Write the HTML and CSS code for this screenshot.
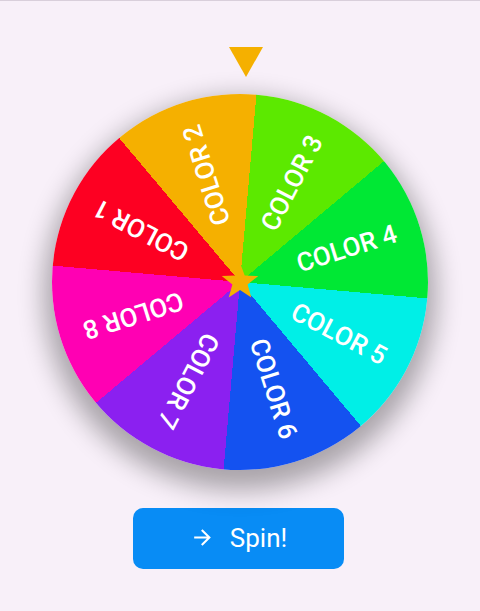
FILE: index.html
```html
<!DOCTYPE html>
<html lang="en">
<head>
<meta charset="utf-8">
<title>Fortune wheel</title>
<link rel="stylesheet" href="styles.css">
</head>
<body>
<main class="page">
  <div class="pointer"></div>
  <div class="wheel">
    <span class="label l1">COLOR 1</span>
    <span class="label l2">COLOR 2</span>
    <span class="label l3">COLOR 3</span>
    <span class="label l4">COLOR 4</span>
    <span class="label l5">COLOR 5</span>
    <span class="label l6">COLOR 6</span>
    <span class="label l7">COLOR 7</span>
    <span class="label l8">COLOR 8</span>
    <svg class="star" viewBox="-20 -20 40 40" width="40" height="40" aria-hidden="true">
      <polygon points="0,-19.2 4.7,-6.47 18.26,-5.93 7.61,2.47 11.29,15.53 0,8 -11.29,15.53 -7.61,2.47 -18.26,-5.93 -4.7,-6.47" fill="#f5b000"/>
    </svg>
  </div>
  <button class="spin" type="button">
    <svg class="arrow" viewBox="0 0 24 24" width="25" height="25" aria-hidden="true">
      <path d="M12 4l-1.41 1.41L16.17 11H4v2h12.17l-5.58 5.59L12 20l8-8z" fill="#ffffff"/>
    </svg>
    <span>Spin!</span>
  </button>
</main>
</body>
</html>
```
FILE: styles.css
```css
html, body {
  margin: 0;
  padding: 0;
}
body {
  background: #f8f0f9;
  border-top: 1px solid #d9cfdb;
  height: 610px;
  overflow: hidden;
  font-family: Roboto, "Noto Sans", sans-serif;
}
.page {
  display: flex;
  flex-direction: column;
  align-items: center;
  padding-top: 46px;
}
.pointer {
  width: 0;
  height: 0;
  border-left: 17.5px solid transparent;
  border-right: 17.5px solid transparent;
  border-top: 30px solid #f5b000;
  margin-left: 12px;
}
.wheel {
  position: relative;
  width: 376px;
  height: 376px;
  margin-top: 17px;
  border-radius: 50%;
  background: conic-gradient(from 5deg,
    #5ce900 0deg 45deg,
    #00e834 45deg 90deg,
    #00efe7 90deg 135deg,
    #1452f0 135deg 180deg,
    #8b20f0 180deg 225deg,
    #ff00b3 225deg 270deg,
    #fd0022 270deg 315deg,
    #f5b000 315deg 360deg);
  box-shadow: 0 12px 26px 8px rgba(0, 0, 0, 0.32);
}
.label {
  position: absolute;
  left: 50%;
  top: 50%;
  height: 26px;
  line-height: 26px;
  font-size: 26px;
  font-weight: 500;
  color: #ffffff;
  white-space: nowrap;
  transform-origin: 0 0;
}
.l1 { transform: rotate(207.5deg) translate(60px, -50%); }
.l2 { transform: rotate(-107.5deg) translate(60px, -50%); }
.l3 { transform: rotate(-62.5deg) translate(60px, -50%); }
.l4 { transform: rotate(-17.5deg) translate(60px, -50%); }
.l5 { transform: rotate(27.5deg) translate(60px, -50%); }
.l6 { transform: rotate(72.5deg) translate(60px, -50%); }
.l7 { transform: rotate(117.5deg) translate(60px, -50%); }
.l8 { transform: rotate(162.5deg) translate(60px, -50%); }
.star {
  position: absolute;
  left: 168px;
  top: 168px;
}
.spin {
  display: flex;
  align-items: center;
  justify-content: center;
  gap: 15px;
  width: 211px;
  height: 61px;
  margin-top: 38px;
  margin-right: 3px;
  border: none;
  border-radius: 10px;
  background: #088cf5;
  color: #ffffff;
  font-family: Roboto, "Noto Sans", sans-serif;
  font-size: 26px;
  font-weight: 400;
  padding: 0 0 2px 0;
}
.arrow {
  display: block;
}
```
